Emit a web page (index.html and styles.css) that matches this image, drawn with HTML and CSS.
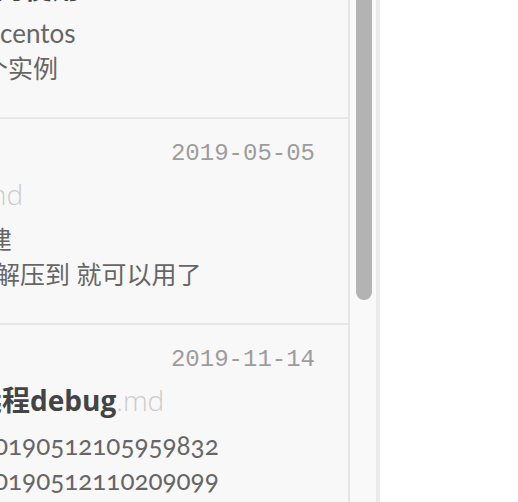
FILE: index.html
```html
<!DOCTYPE html>
<html lang="zh">
<head>
<meta charset="utf-8">
<title>文件列表</title>
<link rel="stylesheet" href="styles.css">
</head>
<body>
<div class="app">
  <aside class="sidebar">
    <div class="list">
      <div class="list-inner">
        <article class="item">
          <div class="date">2019-04-20</div>
          <div class="title shift-t1">的使用</div>
          <div class="text shift-l1">centos</div>
          <div class="text cjk shift-l2">个实例</div>
        </article>
        <article class="item">
          <div class="date">2019-05-05</div>
          <div class="title shift-t2"><span class="ext">.md</span></div>
          <div class="text cjk shift-l3">建</div>
          <div class="text cjk shift-l4">解压到 就可以用了</div>
        </article>
        <article class="item">
          <div class="date">2019-11-14</div>
          <div class="title shift-t3">远程debug<span class="ext">.md</span></div>
          <div class="text shift-l5">20190512105959832</div>
          <div class="text shift-l5">20190512110209099</div>
        </article>
      </div>
    </div>
    <div class="track"><div class="thumb"></div></div>
  </aside>
  <main class="main"></main>
</div>
</body>
</html>
```
FILE: styles.css
```css
html, body {
  margin: 0;
  background: #ffffff;
}
.app {
  display: flex;
  height: 502px;
  overflow: hidden;
}
.sidebar {
  flex: none;
  display: flex;
  width: 376px;
  border-right: 4px solid #ebebeb;
  background: #f8f8f8;
}
.list {
  width: 348px;
  border-right: 2px solid #e6e6e6;
  overflow: hidden;
}
.list-inner {
  margin-top: -87px;
}
.item {
  padding: 17px 0 31px;
  border-bottom: 2px solid #e6e6e6;
}
.date {
  font: 24px/36px "Liberation Mono", monospace;
  color: #9d9d9d;
  text-align: right;
  padding-right: 33px;
}
.title {
  font: 700 28px/44px "Open Sans", "Noto Sans CJK SC", sans-serif;
  color: #444444;
  white-space: nowrap;
  margin-bottom: 6px;
}
.ext {
  font-weight: 300;
  color: #cccccc;
}
.text {
  font: 26px/35px Lato, "Noto Sans CJK SC", sans-serif;
  font-variant-numeric: oldstyle-nums;
  color: #666666;
  white-space: nowrap;
}
.text.cjk {
  font-size: 25px;
}
.shift-t1 { margin-left: -4px; }
.shift-t2 { margin-left: -25px; }
.shift-t3 { margin-left: -26px; }
.shift-l1 { margin-left: 0; }
.shift-l2 { margin-left: -17px; }
.shift-l3 { margin-left: -13px; }
.shift-l4 { margin-left: -5px; }
.shift-l5 { margin-left: -20px; }
.track {
  width: 26px;
  background: #f9f9f9;
}
.thumb {
  margin: -20px 0 0 6px;
  width: 16px;
  height: 320px;
  background: #b3b3b3;
  border-radius: 8px;
}
.main {
  flex: 1;
  background: #ffffff;
}
```
